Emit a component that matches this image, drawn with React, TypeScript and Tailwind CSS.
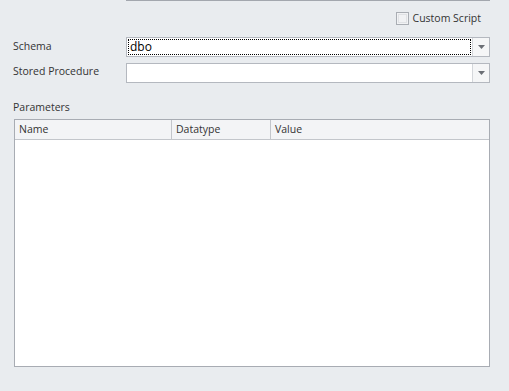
import React from "react";

function Arrow() {
  return (
    <svg width="7" height="4" viewBox="0 0 7 4">
      <path d="M0 0 H7 L3.5 4 Z" fill="#6b6f75" />
    </svg>
  );
}

function Combo({ value, focused }: { value?: string; focused?: boolean }) {
  return (
    <div className="flex h-[20px] flex-1 border border-[#b4b8bf] bg-white">
      <div className="flex flex-1 items-stretch p-px">
        <div
          className={
            "flex flex-1 items-center pl-[1px] text-[12px] leading-none text-black " +
            (focused ? "border border-dotted border-black" : "border border-transparent")
          }
        >
          {value}
        </div>
      </div>
      <div className="flex w-[17px] items-center justify-center border-l border-[#d4d7db] bg-[#f5f6f7]">
        <Arrow />
      </div>
    </div>
  );
}

export default function App() {
  return (
    <div
      className="h-[391px] w-[509px] overflow-hidden bg-[#e9ecef] text-[11px] text-[#202020]"
      style={{ fontFamily: '"Open Sans", "Noto Sans", sans-serif' }}
    >
      <div className="ml-[126px] mr-[19px] h-px bg-[#a3a7ae]" />
      <div className="mt-[10px] flex justify-end pr-[28px]">
        <div className="flex items-center gap-[4px]">
          <div className="h-[13px] w-[13px] border border-[#a9adb3] bg-[#f1f2f4] p-px">
            <div className="h-full w-full border border-[#e0e2e5]" />
          </div>
          <span className="text-[10.5px] leading-[14px] text-[#333]">Custom Script</span>
        </div>
      </div>
      <div className="mt-[12px] flex items-center pl-[13px] pr-[19px]">
        <div className="w-[113px] text-[10.5px] text-[#333]">Schema</div>
        <Combo value="dbo" focused />
      </div>
      <div className="mt-[6px] flex items-center pl-[13px] pr-[19px]">
        <div className="w-[113px] -mt-[2px] text-[10.5px] text-[#333]">Stored Procedure</div>
        <Combo />
      </div>
      <div className="mt-[17px] pl-[13px] text-[10.5px] leading-[14px] text-[#333]">Parameters</div>
      <div className="ml-[14px] mr-[19px] mt-[5px] flex h-[248px] flex-col border border-[#a8acb3] bg-white">
        <div className="flex h-[20px] border-b border-[#c3c6cb] bg-[#f3f4f6] text-[10.5px] text-[#333]">
          <div className="flex w-[157px] items-center border-r border-[#c3c6cb] pl-[4px]">Name</div>
          <div className="flex w-[99px] items-center border-r border-[#c3c6cb] pl-[4px]">Datatype</div>
          <div className="flex flex-1 items-center pl-[4px]">Value</div>
        </div>
        <div className="flex-1" />
      </div>
    </div>
  );
}
